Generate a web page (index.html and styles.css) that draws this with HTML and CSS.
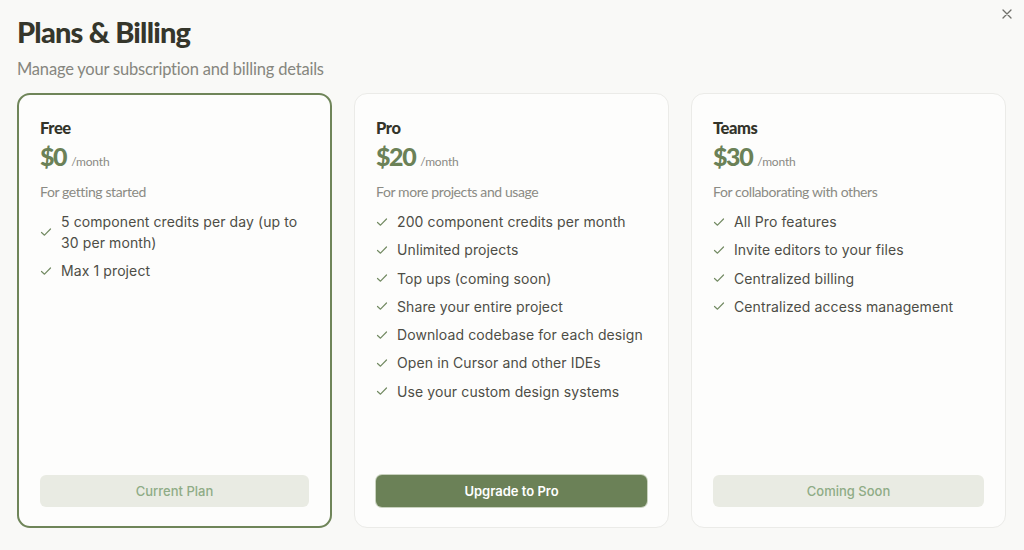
FILE: index.html
```html
<!DOCTYPE html>
<html lang="en">
<head>
<meta charset="utf-8">
<title>Plans &amp; Billing</title>
<link rel="stylesheet" href="styles.css">
</head>
<body>
<div class="page">
  <button class="close" aria-label="Close">
    <svg width="10" height="10" viewBox="0 0 10 10"><path d="M1 1L9 9M9 1L1 9" stroke="#6f6f6a" stroke-width="1.3" stroke-linecap="round"/></svg>
  </button>
  <header class="header">
    <h1 class="title">Plans &amp; Billing</h1>
    <p class="subtitle">Manage your subscription and billing details</p>
  </header>
  <div class="plans">
    <section class="card card-current">
      <h2 class="plan-name">Free</h2>
      <div class="price"><span class="amount">$0</span><span class="per">/month</span></div>
      <p class="tagline">For getting started</p>
      <ul class="features">
        <li><svg class="check" viewBox="0 0 12 12"><path d="M1.5 6.5L4.5 9.2L10.5 3" /></svg><span>5 component credits per day (up to 30 per month)</span></li>
        <li><svg class="check" viewBox="0 0 12 12"><path d="M1.5 6.5L4.5 9.2L10.5 3" /></svg><span>Max 1 project</span></li>
      </ul>
      <button class="btn btn-muted">Current Plan</button>
    </section>
    <section class="card">
      <h2 class="plan-name">Pro</h2>
      <div class="price"><span class="amount">$20</span><span class="per">/month</span></div>
      <p class="tagline">For more projects and usage</p>
      <ul class="features">
        <li><svg class="check" viewBox="0 0 12 12"><path d="M1.5 6.5L4.5 9.2L10.5 3" /></svg><span>200 component credits per month</span></li>
        <li><svg class="check" viewBox="0 0 12 12"><path d="M1.5 6.5L4.5 9.2L10.5 3" /></svg><span>Unlimited projects</span></li>
        <li><svg class="check" viewBox="0 0 12 12"><path d="M1.5 6.5L4.5 9.2L10.5 3" /></svg><span>Top ups (coming soon)</span></li>
        <li><svg class="check" viewBox="0 0 12 12"><path d="M1.5 6.5L4.5 9.2L10.5 3" /></svg><span>Share your entire project</span></li>
        <li><svg class="check" viewBox="0 0 12 12"><path d="M1.5 6.5L4.5 9.2L10.5 3" /></svg><span>Download codebase for each design</span></li>
        <li><svg class="check" viewBox="0 0 12 12"><path d="M1.5 6.5L4.5 9.2L10.5 3" /></svg><span>Open in Cursor and other IDEs</span></li>
        <li><svg class="check" viewBox="0 0 12 12"><path d="M1.5 6.5L4.5 9.2L10.5 3" /></svg><span>Use your custom design systems</span></li>
      </ul>
      <button class="btn btn-primary">Upgrade to Pro</button>
    </section>
    <section class="card">
      <h2 class="plan-name">Teams</h2>
      <div class="price"><span class="amount">$30</span><span class="per">/month</span></div>
      <p class="tagline">For collaborating with others</p>
      <ul class="features">
        <li><svg class="check" viewBox="0 0 12 12"><path d="M1.5 6.5L4.5 9.2L10.5 3" /></svg><span>All Pro features</span></li>
        <li><svg class="check" viewBox="0 0 12 12"><path d="M1.5 6.5L4.5 9.2L10.5 3" /></svg><span>Invite editors to your files</span></li>
        <li><svg class="check" viewBox="0 0 12 12"><path d="M1.5 6.5L4.5 9.2L10.5 3" /></svg><span>Centralized billing</span></li>
        <li><svg class="check" viewBox="0 0 12 12"><path d="M1.5 6.5L4.5 9.2L10.5 3" /></svg><span>Centralized access management</span></li>
      </ul>
      <button class="btn btn-muted">Coming Soon</button>
    </section>
  </div>
</div>
</body>
</html>
```

FILE: styles.css
```css
* { box-sizing: border-box; }
html, body { margin: 0; padding: 0; }
body {
  background: #f9f9f7;
  font-family: "Inter", "Liberation Sans", sans-serif;
  color: #4a4a44;
  width: 1024px;
  height: 550px;
  overflow: hidden;
}
.page {
  position: relative;
  padding: 13px 18px 0 17px;
}
.close {
  position: absolute;
  top: 6px;
  right: 9px;
  width: 16px;
  height: 16px;
  border: 0;
  background: transparent;
  padding: 3px;
  display: flex;
  align-items: center;
  justify-content: center;
}
.header { display: flex; flex-direction: column; }
.title {
  margin: 0;
  font-family: "Lato", sans-serif;
  font-weight: 900;
  font-size: 29px;
  line-height: 38px;
  letter-spacing: -0.8px;
  color: #35362b;
}
.subtitle {
  margin: 7px 0 0;
  font-family: "Lato", sans-serif;
  font-size: 16.5px;
  line-height: 22px;
  letter-spacing: -0.2px;
  color: #86867e;
}
.plans {
  margin-top: 13px;
  display: grid;
  grid-template-columns: repeat(3, 1fr);
  gap: 22px;
}
.card {
  height: 435px;
  background: #fdfdfc;
  border: 1px solid #ebebe8;
  border-radius: 13px;
  padding: 23px 21px 20px;
  display: flex;
  flex-direction: column;
}
.card-current {
  border: 2px solid #6f8559;
  padding: 22px 21px 19px 21px;
}
.plan-name {
  margin: 0;
  font-family: "Lato", sans-serif;
  font-weight: 900;
  font-size: 16.5px;
  line-height: 22px;
  letter-spacing: -0.4px;
  color: #33342a;
}
.price {
  display: flex;
  align-items: baseline;
  gap: 5px;
  margin-top: 2px;
  height: 30px;
}
.amount {
  font-family: "Lato", sans-serif;
  font-weight: 900;
  font-size: 25px;
  line-height: 30px;
  letter-spacing: -1.4px;
  color: #6b8157;
}
.per {
  font-family: "Lato", sans-serif;
  font-size: 12px;
  color: #8a8a84;
  letter-spacing: -0.2px;
}
.tagline {
  margin: 11px 0 0;
  font-family: "Lato", sans-serif;
  font-size: 14px;
  line-height: 20px;
  letter-spacing: -0.4px;
  color: #8b8b84;
}
.features {
  list-style: none;
  margin: 9px 0 0;
  padding: 0;
  display: flex;
  flex-direction: column;
  gap: 7.3px;
}
.features li {
  display: flex;
  align-items: center;
  gap: 9px;
  font-size: 14px;
  line-height: 21px;
  letter-spacing: 0.1px;
  color: #4d4d46;
}
.features li span { flex: 1; }
.check {
  width: 12px;
  height: 12px;
  flex: none;
  fill: none;
  stroke: #728a62;
  stroke-width: 1.2;
  stroke-linecap: round;
  stroke-linejoin: round;
}
.btn {
  margin-top: auto;
  height: 32px;
  border: 0;
  border-radius: 6px;
  font-family: "Inter", "Liberation Sans", sans-serif;
  font-size: 13px;
  width: 100%;
}
.btn-muted {
  background: #e9ebe3;
  color: #8fac86;
  font-weight: 500;
}
.btn-primary {
  background: #6b8157;
  color: #ffffff;
  font-weight: 600;
  box-shadow: 0 0 0 1px #c9d2bf;
}
```
